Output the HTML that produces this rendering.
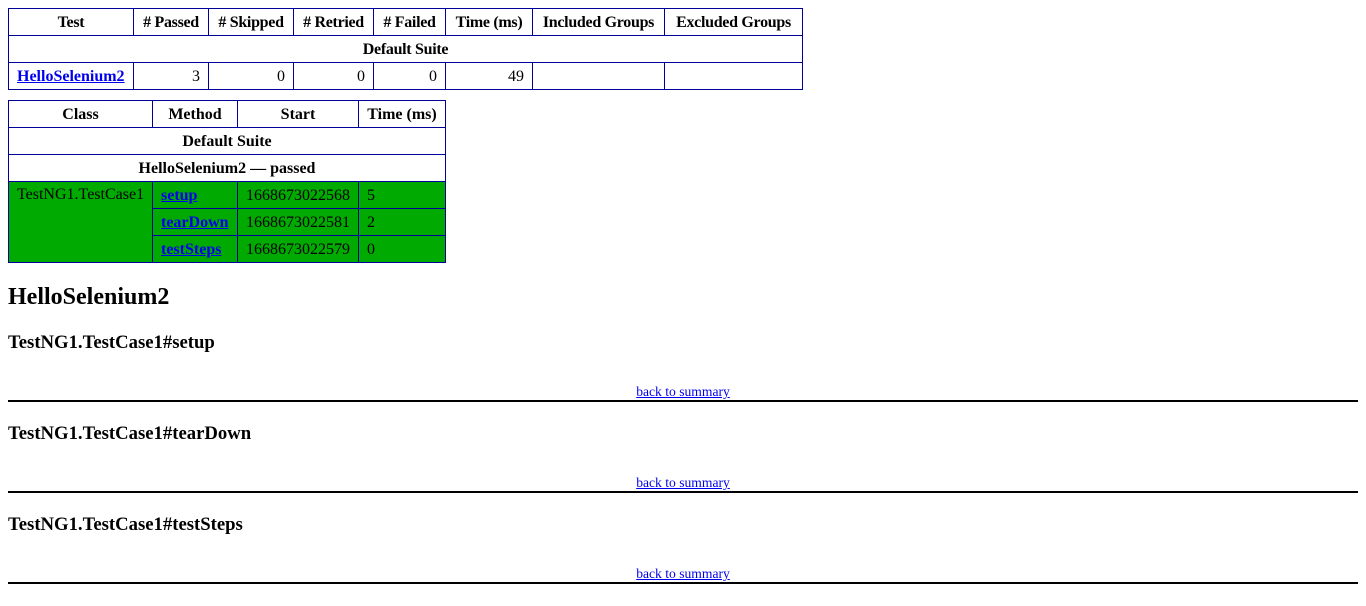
<!DOCTYPE html>
<html><head><meta charset="utf-8"><style>
body{margin:8px;font-family:"Liberation Serif",serif;font-size:16px;color:#000;background:#fff}
table{margin-bottom:10px;border-collapse:collapse;empty-cells:show;table-layout:fixed}
th,td{border:1px solid #009;padding:1px .5em 0;height:27px;box-sizing:border-box;white-space:nowrap;overflow:hidden}
th{vertical-align:middle;font-weight:bold}
.t1 th{padding:1px 2px 0;letter-spacing:-0.3px}
td{vertical-align:middle}
table a{font-weight:bold;color:#00e}
.num{text-align:right}
.p td{background:#0A0}
h2{font-size:24px;margin:20px 0 0;line-height:28px}
h3{font-size:18.7px;margin:20px 0 0;line-height:22px}
.totop{font-size:85%;text-align:center;border-bottom:2px solid #000;margin-top:30px;line-height:16px}
.totop a{color:#00e}
</style></head><body>
<table class="t1" style="width:794px">
<colgroup><col style="width:125px"><col style="width:75px"><col style="width:85px"><col style="width:80px"><col style="width:72px"><col style="width:87px"><col style="width:132px"><col style="width:138px"></colgroup>
<tr><th>Test</th><th># Passed</th><th># Skipped</th><th># Retried</th><th># Failed</th><th>Time (ms)</th><th>Included Groups</th><th>Excluded Groups</th></tr>
<tr><th colspan="8">Default Suite</th></tr>
<tr><td><a href="#t0">HelloSelenium2</a></td><td class="num">3</td><td class="num">0</td><td class="num">0</td><td class="num">0</td><td class="num">49</td><td></td><td></td></tr>
</table>
<table style="width:437px">
<colgroup><col style="width:144px"><col style="width:85px"><col style="width:121px"><col style="width:87px"></colgroup>
<tr><th>Class</th><th>Method</th><th>Start</th><th>Time (ms)</th></tr>
<tr><th colspan="4">Default Suite</th></tr>
<tr><th colspan="4">HelloSelenium2 — passed</th></tr>
<tr class="p"><td rowspan="3" style="vertical-align:top;padding-top:4px">TestNG1.TestCase1</td><td><a href="#m0">setup</a></td><td>1668673022568</td><td>5</td></tr>
<tr class="p"><td><a href="#m1">tearDown</a></td><td>1668673022581</td><td>2</td></tr>
<tr class="p"><td><a href="#m2">testSteps</a></td><td>1668673022579</td><td>0</td></tr>
</table>
<h2>HelloSelenium2</h2>
<h3 style="margin-top:21px">TestNG1.TestCase1#setup</h3>
<div class="totop"><a href="#summary">back to summary</a></div>
<h3 style="margin-top:21px">TestNG1.TestCase1#tearDown</h3>
<div class="totop"><a href="#summary">back to summary</a></div>
<h3 style="margin-top:21px">TestNG1.TestCase1#testSteps</h3>
<div class="totop"><a href="#summary">back to summary</a></div>
</body></html>
